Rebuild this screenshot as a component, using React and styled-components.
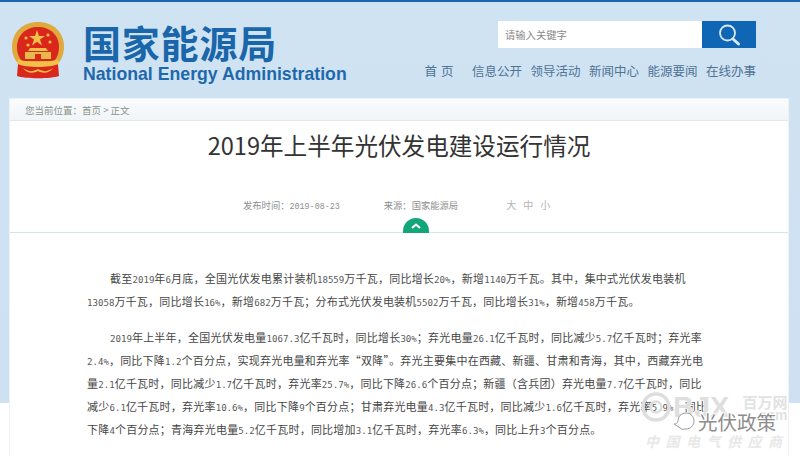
import React from 'react';
import styled, { createGlobalStyle } from 'styled-components';

const CJK = '"Noto Sans CJK SC", sans-serif';

const navItems = ['信息公开', '领导活动', '新闻中心', '能源要闻', '在线办事'];

const paragraphs = [
    [
        '截至2019年6月底，全国光伏发电累计装机18559万千瓦，同比增长20%，新增1140万千瓦。其中，集中式光伏发电装机',
        '13058万千瓦，同比增长16%，新增682万千瓦；分布式光伏发电装机5502万千瓦，同比增长31%，新增458万千瓦。',
    ],
    [
        '2019年上半年，全国光伏发电量1067.3亿千瓦时，同比增长30%；弃光电量26.1亿千瓦时，同比减少5.7亿千瓦时；弃光率',
        '2.4%，同比下降1.2个百分点，实现弃光电量和弃光率“双降”。弃光主要集中在西藏、新疆、甘肃和青海，其中，西藏弃光电',
        '量2.1亿千瓦时，同比减少1.7亿千瓦时，弃光率25.7%，同比下降26.6个百分点；新疆（含兵团）弃光电量7.7亿千瓦时，同比',
        '减少6.1亿千瓦时，弃光率10.6%，同比下降9个百分点；甘肃弃光电量4.3亿千瓦时，同比减少1.6亿千瓦时，弃光率5.9%，同比',
        '下降4个百分点；青海弃光电量5.2亿千瓦时，同比增加3.1亿千瓦时，弃光率6.3%，同比上升3个百分点。',
    ],
];

// digits, dots and % are all half width in the reference
function LineText ({ text }) {
    return text.split(/([0-9.%]+)/).map((part, i) => (
        /^[0-9.%]+$/.test(part) ? <Num key={i}>{part}</Num> : part
    ));
}

export default function App () {
    return (
        <Page>
            <GlobalStyle />
            <TopBar />
            <Header>
                <Brand>
                    <Emblem />
                    <BrandText>
                        <BrandName>国家能源局</BrandName>
                        <BrandEnglish>National Energy Administration</BrandEnglish>
                    </BrandText>
                </Brand>
                <HeaderRight>
                    <Search>
                        <SearchInput>请输入关键字</SearchInput>
                        <SearchButton>
                            <svg width="26" height="26" viewBox="0 0 26 26" fill="none" stroke="#d8e8f5" strokeLinecap="round">
                                <circle cx="11.5" cy="11" r="7.5" strokeWidth="1.8" />
                                <path d="M17 17l5.5 5" strokeWidth="3" />
                            </svg>
                        </SearchButton>
                    </Search>
                    <Nav>
                        <NavItem $home>首 页</NavItem>
                        {navItems.map(item => <NavItem key={item}>{item}</NavItem>)}
                    </Nav>
                </HeaderRight>
            </Header>
            <Panel>
                <Breadcrumb>您当前位置：首页 &gt; 正文</Breadcrumb>
                <Title>2019年上半年光伏发电建设运行情况</Title>
                <Meta>
                    <MetaText>发布时间：<MetaDate>2019-08-23</MetaDate></MetaText>
                    <MetaText>来源：国家能源局</MetaText>
                    <FontSizes><span>大</span><span>中</span><span>小</span></FontSizes>
                    <Toggle>
                        <svg width="10" height="6" viewBox="0 0 10 6" fill="none" stroke="#fff" strokeWidth="2">
                            <path d="M1 5l4-3.5L9 5" />
                        </svg>
                    </Toggle>
                </Meta>
                <Article>
                    {paragraphs.map((lines, p) => (
                        <Paragraph key={p}>
                            {lines.map((line, i) => <Line key={i} $first={i === 0}><LineText text={line} /></Line>)}
                        </Paragraph>
                    ))}
                </Article>
            </Panel>
            <Watermark />
        </Page>
    );
}

function Emblem () {
    return (
        <svg width="54" height="58" viewBox="0 0 54 58">
            <path d="M27 1C12 1 1 11 1 26c0 9 4 15 9 20h34c5-5 9-11 9-20C53 11 42 1 27 1z" fill="#e0a93e" />
            <path d="M27 6C15 6 6 14 6 26c0 6 2 11 5 14h32c3-3 5-8 5-14C48 14 39 6 27 6z" fill="#d9271c" />
            <path d="M26 9l2 6 6 0-5 3.500 2 6-5-3.700-5 3.700 2-6-5-3.500 6 0z" fill="#efc04a" />
            <g fill="#efc04a">
                <circle cx="15" cy="17" r="1.600" />
                <circle cx="37" cy="14" r="1.600" />
                <circle cx="39" cy="21" r="1.600" />
                <circle cx="17" cy="24" r="1.600" />
            </g>
            <path d="M19 27h16l2 3H17z" fill="#efc04a" />
            <path d="M14 31h26v7H14z" fill="#e9b84a" />
            <path d="M24 33h6v5h-6z" fill="#d9271c" />
            <path d="M7 38c6 4 34 4 40 0l1 4c-6 5-36 5-42 0z" fill="#efc04a" />
            <path d="M7 43c5 4 35 4 40 0l1 12c-8 3-34 3-42 0z" fill="#d9271c" />
            <path d="M12 47c6 4 9 4 15 1 6 3 9 3 15-1-3 5-10 6-15 3-5 3-12 2-15-3z" fill="#efc04a" />
        </svg>
    );
}

function Watermark () {
    return (
        <WatermarkBox>
            <WatermarkLogo>
                <svg width="32" height="32" viewBox="0 0 32 32" fill="none" stroke="#dedede">
                    <circle cx="16" cy="16" r="13" strokeWidth="3.500" />
                    <circle cx="16" cy="16" r="5.500" strokeWidth="2.500" />
                </svg>
                <WatermarkBjx>BJX</WatermarkBjx>
                <WatermarkSite>
                    <span>百万网</span>
                    <small>.com</small>
                </WatermarkSite>
            </WatermarkLogo>
            <Channel>
                <svg width="22" height="22" viewBox="0 0 22 22" fill="#fff" stroke="#8f8f8f" strokeWidth="0.900">
                    <path d="M5 10c0-4.500 3.500-8 8-8s8 3.500 8 8-3.500 8-8 8c-1.500 0-2.500 0-3.500.5L1 13c2 0 3 0 4-3z" />
                </svg>
                <ChannelName>光伏政策</ChannelName>
            </Channel>
            <Slogan>中国电气供应商</Slogan>
        </WatermarkBox>
    );
}

//styled components

const GlobalStyle = createGlobalStyle`
    html, body {
        margin: 0;
        padding: 0;
        background: #fff;
    }
    * {
        box-sizing: border-box;
    }
`

const Page = styled.div`
    position: relative;
    width: 800px;
    height: 456px;
    overflow: hidden;
    font-family: ${CJK};
    background: linear-gradient(#d0e3f3 0, #cde1f2 403px, #fff 403px);
`

const TopBar = styled.div`
    height: 2px;
    background: #1b66ae;
`

const Header = styled.header`
    height: 97px;
    padding: 19px 44px 0 11px;
    display: flex;
    justify-content: space-between;
    align-items: flex-start;
`

const Brand = styled.div`
    display: flex;
    gap: 18px;
    align-items: flex-start;
`

const BrandText = styled.div`
    display: flex;
    flex-direction: column;
`

const BrandName = styled.div`
    font-size: 38px;
    line-height: 42px;
    font-weight: 700;
    letter-spacing: 0.8px;
    color: #1a66ab;
`

const BrandEnglish = styled.div`
    font-family: "Liberation Sans", sans-serif;
    font-size: 17.7px;
    line-height: 22px;
    font-weight: 700;
    color: #1e69ab;
`

const HeaderRight = styled.div`
    display: flex;
    flex-direction: column;
    align-items: flex-end;
    gap: 14px;
`

const Search = styled.div`
    display: flex;
    align-items: center;
`

const SearchInput = styled.div`
    width: 204px;
    height: 27px;
    padding-left: 7px;
    background: #fff;
    font-size: 10.3px;
    line-height: 27px;
    color: #8a8a8a;
`

const SearchButton = styled.div`
    width: 54px;
    height: 27px;
    background: #0f66b4;
    display: flex;
    align-items: center;
    justify-content: center;
`

const Nav = styled.nav`
    display: flex;
    gap: 8.5px;
`

const NavItem = styled.span`
    font-size: 12.5px;
    line-height: 18px;
    color: #4f7394;
    margin-right: ${props => props.$home ? "10px" : "0"};
    word-spacing: ${props => props.$home ? "1px" : "0"};
`

const Panel = styled.main`
    width: 778px;
    margin-left: 10px;
    height: 357px;
    background: #fff;
    box-shadow: 0 0 0 1px #eef2f5;
`

const Breadcrumb = styled.div`
    height: 22px;
    padding-left: 15px;
    font-size: 9.5px;
    line-height: 22px;
    color: #8b9388;
    background: linear-gradient(#fafcfe, #f1f5f7);
    border-bottom: 1px solid #e6e8e8;
`

const Title = styled.h1`
    margin: 0;
    padding-top: 8px;
    height: 76px;
    text-align: center;
    font-size: 23.6px;
    line-height: 32px;
    font-weight: 400;
    color: #333;
`

const Meta = styled.div`
    position: relative;
    height: 36px;
    padding: 0 0 20px 233px;
    display: flex;
    align-items: flex-end;
    gap: 44px;
    border-bottom: 1px solid #d5e9e3;
`

const MetaText = styled.span`
    height: 14px;
    font-size: 9.3px;
    line-height: 14px;
    color: #8e8e8e;
`

const MetaDate = styled.span`
    font-family: "Liberation Mono", monospace;
    font-size: 8.4px;
    line-height: 1;
`

const FontSizes = styled.span`
    display: flex;
    gap: 7px;
    margin-left: 4px;
    font-size: 10px;
    line-height: 14px;
    color: #b4b4b4;
`

const Toggle = styled.div`
    position: absolute;
    left: 393px;
    bottom: -1px;
    width: 26px;
    height: 15px;
    border-radius: 13px 13px 0 0;
    background: #12a67a;
    display: flex;
    justify-content: center;
    padding-top: 5px;
`

const Article = styled.article`
    padding: 34px 0 0 77px;
    display: flex;
    flex-direction: column;
    gap: 13px;
`

const Paragraph = styled.p`
    margin: 0;
`

const Line = styled.span`
    display: block;
    height: 23px;
    white-space: nowrap;
    font-size: 11px;
    line-height: 23px;
    letter-spacing: 0.22px;
    color: #464646;
    text-indent: ${props => props.$first ? "23px" : "0"};
`

const Num = styled.span`
    font-family: "DejaVu Sans Mono", monospace;
    font-size: 9.1px;
    line-height: 1;
    letter-spacing: 0;
    color: #5a5a5a;
`

const WatermarkBox = styled.div`
    position: absolute;
    left: 640px;
    top: 390px;
    width: 160px;
    height: 66px;
`

const WatermarkLogo = styled.div`
    display: flex;
    align-items: center;
    gap: 1px;
    height: 34px;
`

const WatermarkBjx = styled.span`
    font-family: "Liberation Sans", sans-serif;
    font-size: 29px;
    font-weight: 700;
    color: #dfdfdf;
    -webkit-text-stroke: 1px #fff;
    paint-order: stroke fill;
`

const WatermarkSite = styled.span`
    display: flex;
    flex-direction: column;
    margin-left: 12px;
    font-size: 15px;
    line-height: 15px;
    font-weight: 700;
    color: #e2e2e2;

    small {
        font-family: "Liberation Sans", sans-serif;
        font-size: 14px;
        line-height: 12px;
        text-align: right;
    }
`

const Channel = styled.div`
    position: absolute;
    left: 33px;
    top: 20px;
    display: flex;
    align-items: center;
    gap: 3px;
`

const ChannelName = styled.span`
    font-size: 19.5px;
    line-height: 24px;
    color: #8d8d8d;
    -webkit-text-stroke: 2px #fff;
    paint-order: stroke fill;
`

const Slogan = styled.div`
    position: absolute;
    left: 5px;
    top: 43px;
    font-size: 14px;
    line-height: 16px;
    font-weight: 700;
    font-style: italic;
    letter-spacing: 6.5px;
    white-space: nowrap;
    color: #e8e8e8;
`
